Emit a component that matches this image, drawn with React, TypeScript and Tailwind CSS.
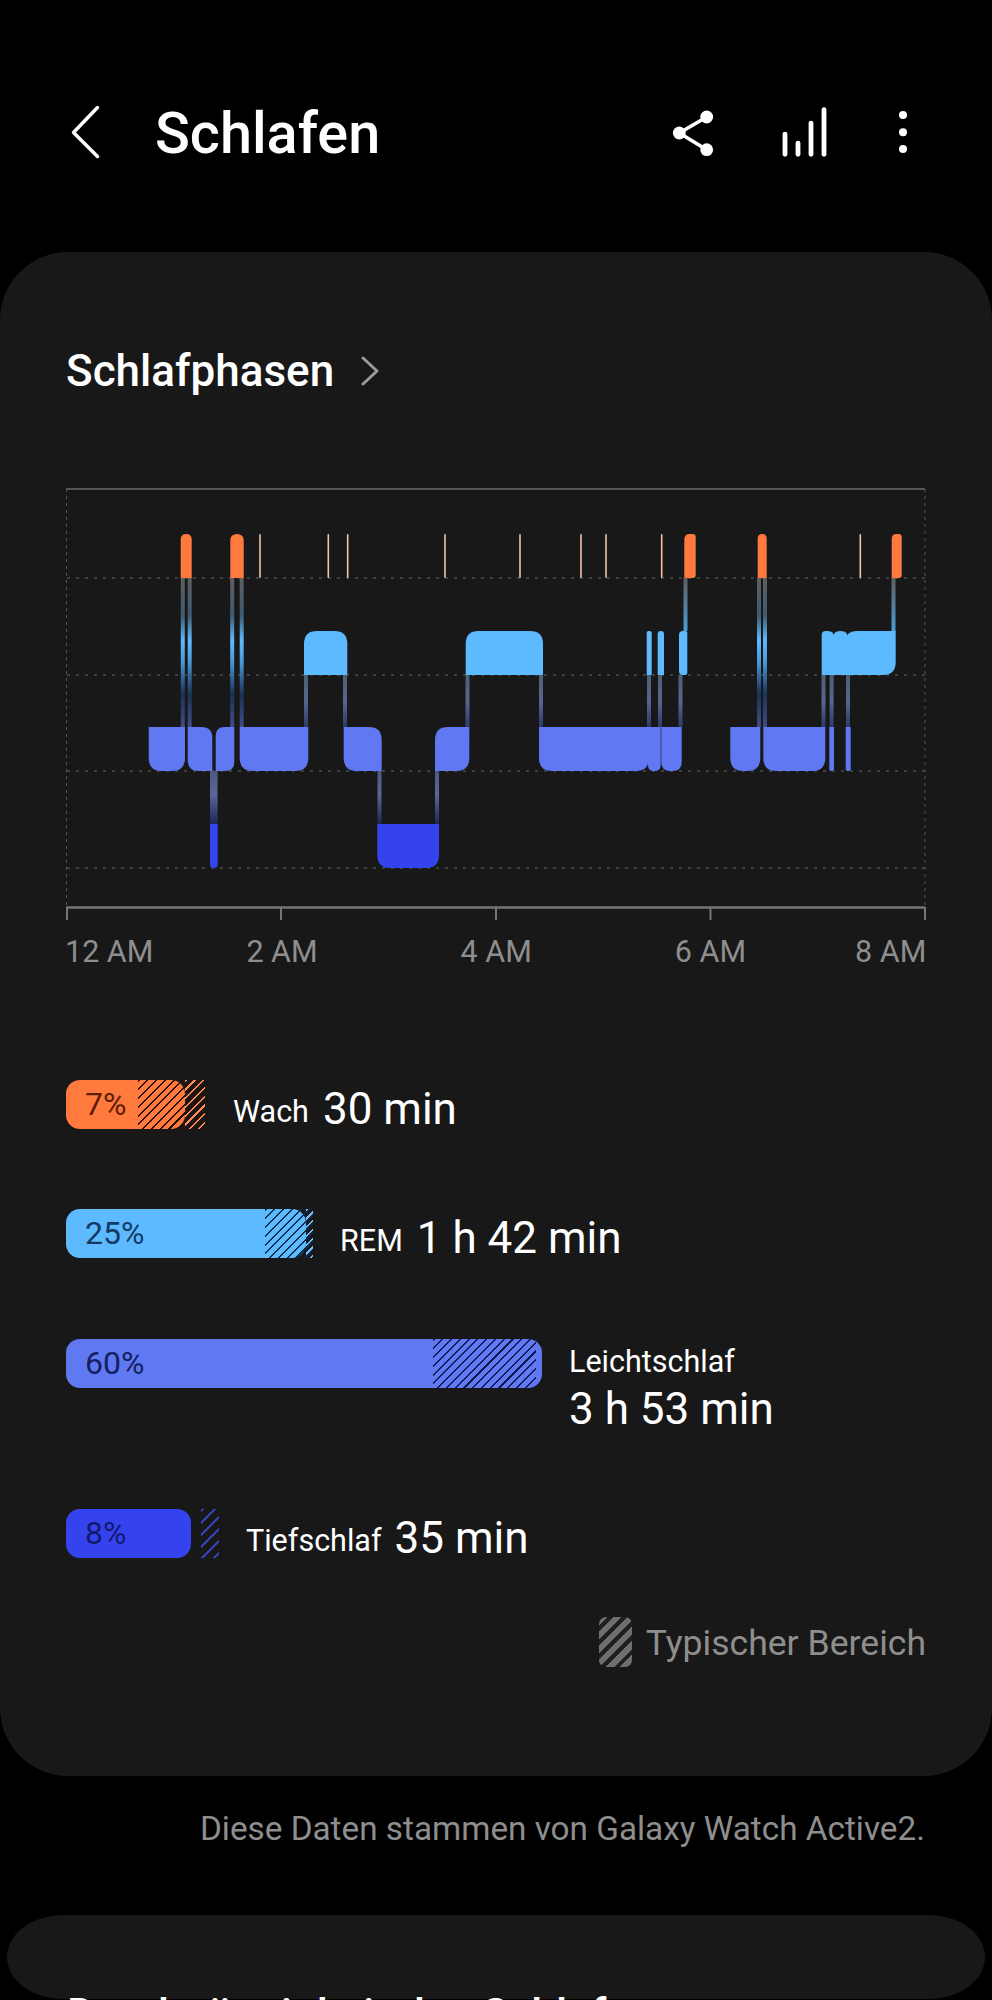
import React from "react";

const WAKE = "#ff7a3c";
const REM = "#5ebaff";
const LIGHT = "#6079f2";
const DEEP = "#3543ee";

type Corners = [number, number, number, number];

function blockPath(x1: number, x2: number, y1: number, y2: number, [tl, tr, br, bl]: Corners) {
  const m = (x2 - x1) / 2;
  const a = Math.min(tl, m), b = Math.min(tr, m), c = Math.min(br, m), d = Math.min(bl, m);
  return `M${x1 + a} ${y1}H${x2 - b}Q${x2} ${y1} ${x2} ${y1 + b}V${y2 - c}Q${x2} ${y2} ${x2 - c} ${y2}H${x1 + d}Q${x1} ${y2} ${x1} ${y2 - d}V${y1 + a}Q${x1} ${y1} ${x1 + a} ${y1}Z`;
}

const WY: [number, number] = [534, 578];
const RY: [number, number] = [631, 675];
const LY: [number, number] = [727, 771];
const DY: [number, number] = [824, 868];

const blocks: { x: [number, number]; y: [number, number]; c: Corners; f: string }[] = [
  { x: [180.7, 191.7], y: WY, c: [6, 6, 0, 0], f: WAKE },
  { x: [230.3, 243.7], y: WY, c: [7, 7, 0, 0], f: WAKE },
  { x: [684.3, 695.7], y: WY, c: [6, 3, 3, 0], f: WAKE },
  { x: [757.7, 766.7], y: WY, c: [5, 5, 0, 0], f: WAKE },
  { x: [891.7, 901.7], y: WY, c: [6, 3, 3, 0], f: WAKE },

  { x: [304, 347.3], y: RY, c: [13, 13, 0, 0], f: REM },
  { x: [465.7, 543], y: RY, c: [13, 13, 0, 0], f: REM },
  { x: [646.7, 651.7], y: RY, c: [2, 2, 0, 0], f: REM },
  { x: [657.7, 664], y: RY, c: [3, 3, 0, 0], f: REM },
  { x: [679, 687.3], y: RY, c: [4, 2, 2, 4], f: REM },
  { x: [821.7, 834], y: RY, c: [4, 6, 0, 0], f: REM },
  { x: [833, 848], y: RY, c: [7, 7, 0, 0], f: REM },
  { x: [846, 895.7], y: RY, c: [10, 0, 13, 0], f: REM },

  { x: [148.7, 185], y: LY, c: [0, 0, 13, 13], f: LIGHT },
  { x: [187.7, 212.3], y: LY, c: [0, 11, 0, 11], f: LIGHT },
  { x: [215.7, 234.3], y: LY, c: [9, 0, 9, 0], f: LIGHT },
  { x: [239.7, 308.3], y: LY, c: [0, 0, 13, 13], f: LIGHT },
  { x: [343.7, 381.7], y: LY, c: [0, 13, 0, 13], f: LIGHT },
  { x: [435, 469.3], y: LY, c: [13, 0, 13, 0], f: LIGHT },
  { x: [539, 649], y: LY, c: [0, 0, 13, 13], f: LIGHT },
  { x: [648, 660.7], y: LY, c: [0, 0, 6, 6], f: LIGHT },
  { x: [661.3, 681.7], y: LY, c: [0, 0, 9, 9], f: LIGHT },
  { x: [730.3, 760.3], y: LY, c: [0, 0, 13, 13], f: LIGHT },
  { x: [763.3, 825.3], y: LY, c: [0, 0, 13, 13], f: LIGHT },
  { x: [829.3, 834], y: LY, c: [0, 0, 2, 2], f: LIGHT },
  { x: [845.7, 850.7], y: LY, c: [0, 0, 2, 2], f: LIGHT },

  { x: [210, 217.7], y: DY, c: [0, 0, 4, 4], f: DEEP },
  { x: [377.3, 439], y: DY, c: [0, 0, 13, 13], f: DEEP },
];

const wakeTicks = [260, 328.3, 347.7, 445, 520, 581, 606, 661.7, 860.3];
const gridYs = [578, 675, 771, 868];

const links: { x: number; y: [number, number]; g: string }[] = [
  { x: 182.8, y: [578, 727], g: "wl" }, { x: 189.7, y: [578, 727], g: "wl" },
  { x: 232.2, y: [578, 727], g: "wl" }, { x: 241.7, y: [578, 727], g: "wl" },
  { x: 306, y: [675, 727], g: "rl" }, { x: 345, y: [675, 727], g: "rl" },
  { x: 467.5, y: [675, 727], g: "rl" }, { x: 541, y: [675, 727], g: "rl" },
  { x: 649, y: [675, 727], g: "rl" }, { x: 660, y: [675, 727], g: "rl" }, { x: 680.5, y: [675, 727], g: "rl" },
  { x: 823.5, y: [675, 727], g: "rl" }, { x: 831.6, y: [675, 727], g: "rl" }, { x: 848, y: [675, 727], g: "rl" },
  { x: 685.5, y: [578, 631], g: "wr" }, { x: 893.5, y: [578, 631], g: "wr" },
  { x: 759, y: [578, 727], g: "wl" }, { x: 765, y: [578, 727], g: "wl" },
  { x: 212, y: [771, 824], g: "ld" }, { x: 215.6, y: [771, 824], g: "ld" },
  { x: 379.5, y: [771, 824], g: "ld" }, { x: 437, y: [771, 824], g: "ld" },
];

function SleepChart() {
  return (
    <svg viewBox="60 485 872 440" className="block w-[872px] h-[440px] -ml-[6px]" fill="none">
      <defs>
        <linearGradient id="wl" gradientUnits="userSpaceOnUse" x1="0" x2="0" y1="578" y2="727">
          <stop offset="0" stopColor="#5f5f5f" />
          <stop offset="0.25" stopColor="#3d5a72" />
          <stop offset="0.42" stopColor="#5ebaff" />
          <stop offset="0.56" stopColor="#4a9ad8" />
          <stop offset="0.78" stopColor="#1b3257" />
          <stop offset="1" stopColor="#414d86" />
        </linearGradient>
        <linearGradient id="wr" gradientUnits="userSpaceOnUse" x1="0" x2="0" y1="578" y2="631">
          <stop offset="0" stopColor="#5f5f5f" />
          <stop offset="1" stopColor="#4a9bd6" />
        </linearGradient>
        <linearGradient id="rl" gradientUnits="userSpaceOnUse" x1="0" x2="0" y1="675" y2="727">
          <stop offset="0" stopColor="#4a6072" />
          <stop offset="0.5" stopColor="#56678f" />
          <stop offset="1" stopColor="#2c3a68" />
        </linearGradient>
        <linearGradient id="ld" gradientUnits="userSpaceOnUse" x1="0" x2="0" y1="771" y2="824">
          <stop offset="0" stopColor="#4d5a80" />
          <stop offset="0.45" stopColor="#5a6697" />
          <stop offset="1" stopColor="#1e2858" />
        </linearGradient>
      </defs>

      <line x1="66" x2="925" y1="489" y2="489" stroke="#555" strokeWidth="2" />
      <line x1="66.5" x2="66.5" y1="489" y2="907" stroke="#555" strokeWidth="1" strokeDasharray="3 4" />
      <line x1="925" x2="925" y1="489" y2="907" stroke="#555" strokeWidth="1" strokeDasharray="3 4" />
      {gridYs.map((y) => (
        <line key={y} x1="67" x2="925" y1={y} y2={y} stroke="#4d4d4d" strokeWidth="1.5" strokeDasharray="3 6" />
      ))}

      {links.map((l, i) => (
        <rect key={i} x={l.x - 2} y={l.y[0]} width="4" height={l.y[1] - l.y[0]} fill={`url(#${l.g})`} />
      ))}

      {wakeTicks.map((x) => (
        <rect key={x} x={x - 0.8} y="534" width="1.6" height="44" rx="0.8" fill="#f2c2aa" />
      ))}

      {blocks.map((b, i) => (
        <path key={i} d={blockPath(b.x[0], b.x[1], b.y[0], b.y[1], b.c)} fill={b.f} />
      ))}

      <line x1="66" x2="925" y1="907.5" y2="907.5" stroke="#757575" strokeWidth="2.5" />
      {[67, 281, 496, 710.5, 925].map((x) => (
        <line key={x} x1={x} x2={x} y1="907" y2="920" stroke="#757575" strokeWidth="2" />
      ))}
    </svg>
  );
}

function ChevronRight() {
  return (
    <svg viewBox="0 0 18 30" className="w-[18px] h-[30px]" fill="none" stroke="#9a9a9a" strokeWidth="3" strokeLinecap="round" strokeLinejoin="round">
      <path d="M2 2 L16 15 L2 28" />
    </svg>
  );
}

function Row({
  bar,
  pct,
  barClass,
  pctClass,
  hatch,
  children,
}: {
  bar: string;
  pct: string;
  barClass: string;
  pctClass: string;
  hatch: React.ReactNode;
  children: React.ReactNode;
}) {
  return (
    <div className="flex items-start">
      <div className={`relative h-[49px] ${bar}`}>
        <div className={`h-[49px] rounded-[14px] pl-[19px] text-[32px] leading-[49px] ${barClass} ${pctClass}`}>{pct}</div>
        {hatch}
      </div>
      {children}
    </div>
  );
}

export default function App() {
  return (
    <div className="relative h-[2000px] w-[992px] overflow-hidden bg-black text-white font-['Roboto',sans-serif]">
      {/* Header */}
      <header className="flex h-[252px] items-start pt-[104px]">
        <svg viewBox="0 0 34 56" className="ml-[68px] w-[34px] h-[56px]" fill="none" stroke="#fff" strokeWidth="3.5" strokeLinecap="round" strokeLinejoin="round">
          <path d="M29.5 3.5 L5.5 28.5 L29.5 52.5" />
        </svg>
        <h1 className="ml-[53px] mt-[1px] text-[57.6px] leading-[58px] font-medium">Schlafen</h1>
        <svg viewBox="0 0 48 48" className="ml-auto w-[48px] h-[48px] mt-[5px]" fill="#fff" stroke="#fff">
          <path d="M7.3 24 L34.7 8 M7.3 24 L34.7 40.7" strokeWidth="3.6" fill="none" />
          <circle cx="7.3" cy="24" r="6.4" stroke="none" />
          <circle cx="34.7" cy="8" r="6.4" stroke="none" />
          <circle cx="34.7" cy="40.7" r="6.4" stroke="none" />
        </svg>
        <svg viewBox="0 0 48 52" className="ml-[60px] w-[48px] h-[52px] mt-[3px]" fill="#fff">
          <rect x="2.6" y="24.7" width="4.8" height="25" rx="2.4" />
          <rect x="15.6" y="33.7" width="4.8" height="16" rx="2.4" />
          <rect x="28.6" y="13.7" width="4.8" height="36" rx="2.4" />
          <rect x="41.6" y="0.3" width="4.8" height="49.4" rx="2.4" />
        </svg>
        <svg viewBox="0 0 12 48" className="ml-[69px] mr-[83px] w-[12px] h-[48px] mt-[4px]" fill="#fff">
          <circle cx="6" cy="7" r="4" />
          <circle cx="6" cy="24.3" r="4" />
          <circle cx="6" cy="41" r="4" />
        </svg>
      </header>

      {/* Main card */}
      <section className="h-[1524px] rounded-[68px] bg-[#181818] px-[66px] pt-[94px]">
        <div className="flex h-[50px] items-center">
          <h2 className="text-[44px] leading-[50px] font-medium">Schlafphasen</h2>
          <span className="ml-[27px]">
            <ChevronRight />
          </span>
        </div>

        <div className="mt-[89px]">
          <SleepChart />
        </div>

        <div className="-ml-[1px] mt-[7px] flex whitespace-nowrap text-[30.5px] leading-[40px] text-[#8e8e8e]">
          <span className="shrink-0">12 AM</span>
          <span className="ml-[93px] shrink-0">2 AM</span>
          <span className="ml-[143px] shrink-0">4 AM</span>
          <span className="ml-[143px] shrink-0">6 AM</span>
          <span className="ml-[109px] shrink-0">8 AM</span>
        </div>

        <div className="mt-[108px] flex flex-col">
          <Row
            bar="w-[119px]"
            pct="7%"
            barClass="bg-[#ff7a3c]"
            pctClass="text-[#5c1d05]"
            hatch={
              <div className="absolute left-[72px] top-0 h-[49px] w-[67px] bg-[repeating-linear-gradient(135deg,#2a0f05_0px,#2a0f05_1.5px,transparent_1.5px,transparent_6.2px)]">
                <div className="absolute left-[47px] top-0 h-[49px] w-[20px] bg-[repeating-linear-gradient(135deg,#ff8a55_0px,#ff8a55_1.6px,transparent_1.6px,transparent_6.2px)]" />
              </div>
            }
          >
            <span className="ml-[48px] mt-[12px] text-[30.5px] leading-[40px]">Wach</span>
            <span className="ml-[14px] mt-[3px] text-[44px] leading-[52px]">30 min</span>
          </Row>

          <div className="mt-[74px]">
            <Row
              bar="w-[240px]"
              pct="25%"
              barClass="bg-[#5ebaff]"
              pctClass="text-[#113a66]"
              hatch={
                <div className="absolute left-[199px] top-0 h-[49px] w-[48px] bg-[repeating-linear-gradient(135deg,#0c2d50_0px,#0c2d50_1.5px,transparent_1.5px,transparent_6.2px)]">
                  <div className="absolute left-[41px] top-0 h-[49px] w-[7px] bg-[repeating-linear-gradient(135deg,#6cc0ff_0px,#6cc0ff_1.6px,transparent_1.6px,transparent_6.2px)]" />
                </div>
              }
            >
              <span className="ml-[34px] mt-[12px] text-[30.5px] leading-[40px]">REM</span>
              <span className="ml-[14px] mt-[3px] text-[44px] leading-[52px]">1 h 42 min</span>
            </Row>
          </div>

          <div className="mt-[75px]">
            <Row
              bar="w-[476px]"
              pct="60%"
              barClass="bg-[#6079f2]"
              pctClass="text-[#14205f]"
              hatch={
                <div className="absolute left-[367px] top-0 h-[49px] w-[103px] bg-[repeating-linear-gradient(135deg,#101a55_0px,#101a55_1.5px,transparent_1.5px,transparent_6.2px)]" />
              }
            >
              <div className="ml-[27px] mt-[3px] flex flex-col">
                <span className="text-[30.5px] leading-[40px]">Leichtschlaf</span>
                <span className="mt-[1px] text-[44px] leading-[52px]">3 h 53 min</span>
              </div>
            </Row>
          </div>

          <div className="mt-[74px]">
            <Row
              bar="w-[125px]"
              pct="8%"
              barClass="bg-[#3543ee]"
              pctClass="text-[#101a70]"
              hatch={
                <div className="absolute left-[135px] top-0 h-[49px] w-[18px] bg-[repeating-linear-gradient(135deg,#3543b8_0px,#3543b8_2.6px,transparent_2.6px,transparent_8.5px)]" />
              }
            >
              <span className="ml-[55px] mt-[12px] text-[30.5px] leading-[40px]">Tiefschlaf</span>
              <span className="ml-[13px] mt-[3px] text-[44px] leading-[52px]">35 min</span>
            </Row>
          </div>
        </div>

        <div className="mt-[52px] flex items-center justify-end">
          <div className="h-[50px] w-[33px] rounded-[7px] bg-[repeating-linear-gradient(135deg,#6e6e6e_0px,#6e6e6e_6px,#1f1f1f_6px,#1f1f1f_10px)]" />
          <span className="ml-[14px] mt-[2px] text-[35.6px] leading-[50px] text-[#8e8e8e]">Typischer Bereich</span>
        </div>
      </section>

      <p className="mr-[67px] mt-[33px] text-right text-[33.3px] leading-[40px] text-[#8e8e8e]">
        Diese Daten stammen von Galaxy Watch Active2.
      </p>

      {/* Next card, cut by the screen's edge */}
      <div className="absolute left-0 right-0 top-[1915px] px-[7px]">
        <div className="h-[84px] rounded-[56px/42px] bg-[#181818]" />
      </div>
      <h2 className="absolute left-[67px] top-[1990px] text-[44px] leading-[50px] font-medium">
        Durchgängigkeit des Schlafs
      </h2>
    </div>
  );
}
